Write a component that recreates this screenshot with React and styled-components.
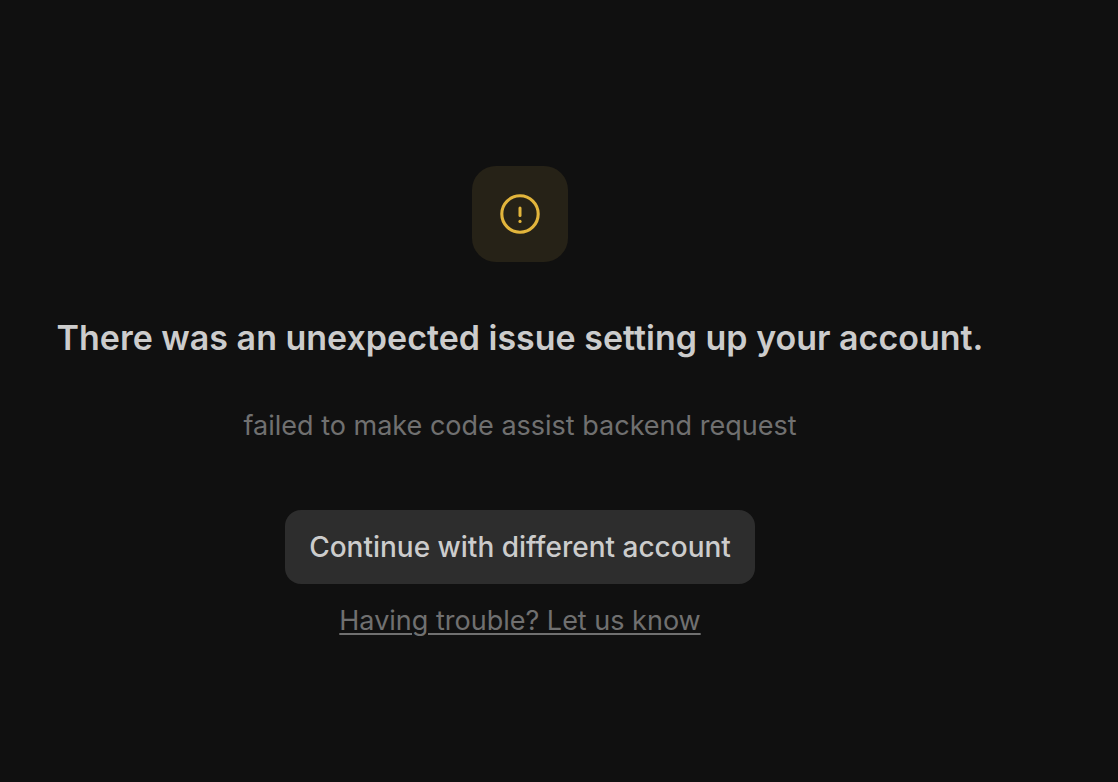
import React from 'react';
import styled, { createGlobalStyle } from 'styled-components';

const GlobalStyle = createGlobalStyle`
  * {
    box-sizing: border-box;
  }
  body {
    margin: 0;
    background: #101010;
    font-family: Inter, "Liberation Sans", sans-serif;
  }
`
const Page = styled.main`
  display: flex;
  flex-direction: column;
  align-items: center;
  min-height: 100vh;
  padding: 166px 78px 48px 0;
  text-align: center;
`
const IconBox = styled.div`
  display: flex;
  align-items: center;
  justify-content: center;
  width: 96px;
  height: 96px;
  border-radius: 24px;
  background: #262217;
`
const Title = styled.h1`
  margin: 48px 0 0;
  color: #cccccc;
  font-size: 34px;
  font-weight: 600;
  line-height: 56px;
`
const Message = styled.p`
  margin: 40px 0 0;
  color: #707070;
  font-size: 27px;
  line-height: 40px;
`
const Actions = styled.div`
  display: flex;
  flex-direction: column;
  align-items: center;
  gap: 16px;
  margin-top: 64px;
`
const ContinueButton = styled.button`
  padding: 16px 24px;
  border: none;
  border-radius: 16px;
  background: #2d2d2d;
  color: #cccccc;
  font-family: inherit;
  font-size: 28px;
  font-weight: 500;
  line-height: 42px;
  cursor: pointer;
`
const HelpLink = styled.a`
  color: #707070;
  font-size: 27px;
  line-height: 42px;
  text-decoration: underline;
  text-decoration-thickness: 2px;
  text-underline-offset: 3px;
`

const AlertIcon = () => (
    <svg width="40" height="40" viewBox="0 0 40 40" fill="none" stroke="#e2b53c" strokeLinecap="round" aria-hidden="true">
        <circle cx="20" cy="20" r="18.2" strokeWidth="3.1" />
        <path d="M20 14v7.5" strokeWidth="3" />
        <circle cx="20" cy="27.4" r="1.6" fill="#e2b53c" stroke="none" />
    </svg>
);

const App = () => {

    return (
        <>
            <GlobalStyle />
            <Page>
                <IconBox>
                    <AlertIcon />
                </IconBox>
                <Title>There was an unexpected issue setting up your account.</Title>
                <Message>failed to make code assist backend request</Message>
                <Actions>
                    <ContinueButton type="button">Continue with different account</ContinueButton>
                    <HelpLink href="#help">Having trouble? Let us know</HelpLink>
                </Actions>
            </Page>
        </>
    );
}

export default App;
